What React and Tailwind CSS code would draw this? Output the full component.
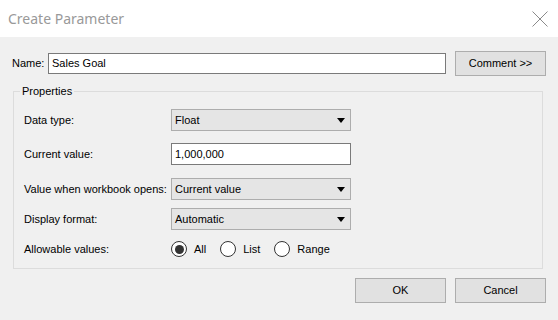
import React from 'react';

const font = { fontFamily: '"Liberation Sans", Arial, sans-serif' };

const Dropdown = ({ value }) => (
  <div className="w-[180px] h-[22px] bg-[#e5e5e5] border border-[#adadad] flex items-center justify-between pl-[3px] pr-[5px]">
    <span>{value}</span>
    <svg width="8" height="5" viewBox="0 0 8 5">
      <path d="M0 0 H8 L4 5 Z" fill="#000" />
    </svg>
  </div>
);

const Radio = ({ label, checked }) => (
  <div className="flex items-center gap-[7px]">
    <div className="w-[16px] h-[16px] rounded-full border border-[#333333] bg-white flex items-center justify-center">
      {checked && <div className="w-[9px] h-[9px] rounded-full bg-[#333333]" />}
    </div>
    <span>{label}</span>
  </div>
);

const Row = ({ label, children }) => (
  <div className="flex items-center h-[22px]">
    <span className="w-[147px] shrink-0 whitespace-nowrap">{label}</span>
    {children}
  </div>
);

export default function App() {
  return (
    <div className="w-[558px] h-[320px] bg-[#f0f0f0] text-[11px] text-black overflow-hidden" style={font}>
      {/* title bar */}
      <div className="h-[37px] bg-white flex items-center justify-between pl-[8px] pr-[10px]">
        <span className="text-[14px] text-[#999999]" style={{ fontFamily: '"Noto Sans", sans-serif' }}>Create Parameter</span>
        <svg width="16" height="16" viewBox="0 0 16 16">
          <path d="M0.5 0.5 L15.5 15.5 M15.5 0.5 L0.5 15.5" stroke="#8a8a8a" strokeWidth="1" />
        </svg>
      </div>

      <div className="px-[12px]">
        {/* name row */}
        <div className="flex items-center pt-[14px]">
          <span className="w-[36px] whitespace-nowrap">Name:</span>
          <div className="w-[398px] h-[21px] bg-white border border-[#7a7a7a] flex items-center px-[3px]">
            Sales Goal
          </div>
          <button className="ml-[9px] w-[91px] h-[25px] bg-[#e1e1e1] border border-[#adadad]">
            Comment &gt;&gt;
          </button>
        </div>

        {/* properties group */}
        <div className="relative mt-[15px] ml-[1px] mr-[3px] border border-[#dcdcdc] pt-[17px] pb-[8px] pl-[10px]">
          <span className="absolute left-[6px] top-[-9px] px-[2px] bg-[#f0f0f0] leading-[16px]">Properties</span>
          <div className="flex flex-col">
            <Row label="Data type:">
              <Dropdown value="Float" />
            </Row>
            <div className="mt-[12px]">
              <Row label="Current value:">
                <div className="w-[180px] h-[22px] bg-white border border-[#7a7a7a] flex items-center px-[3px]">
                  1,000,000
                </div>
              </Row>
            </div>
            <div className="mt-[13px]">
              <Row label="Value when workbook opens:">
                <Dropdown value="Current value" />
              </Row>
            </div>
            <div className="mt-[8px]">
              <Row label="Display format:">
                <Dropdown value="Automatic" />
              </Row>
            </div>
            <div className="mt-[8px]">
              <Row label="Allowable values:">
                <div className="flex items-center gap-[14px]">
                  <Radio label="All" checked />
                  <Radio label="List" />
                  <Radio label="Range" />
                </div>
              </Row>
            </div>
          </div>
        </div>

        {/* buttons */}
        <div className="flex justify-end gap-[9px] mt-[9px]">
          <button className="w-[91px] h-[25px] bg-[#e1e1e1] border border-[#adadad]">OK</button>
          <button className="w-[91px] h-[25px] bg-[#e1e1e1] border border-[#adadad]">Cancel</button>
        </div>
      </div>
    </div>
  );
}
